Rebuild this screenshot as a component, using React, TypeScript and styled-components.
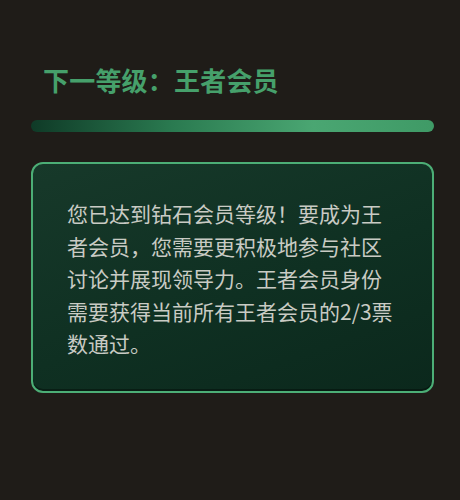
import { createGlobalStyle, styled } from "styled-components"

const GlobalStyle = createGlobalStyle`
    html, body {
        margin: 0;
        padding: 0;
        background: #1f1c18;
    }
    body {
        font-family: "Noto Sans CJK SC", "Noto Sans", sans-serif;
    }
`

const Page = styled.div`
    width: 460px;
    height: 500px;
    box-sizing: border-box;
    padding: 63px 26px 0 31px;
    display: flex;
    flex-direction: column;
    background: #1f1c18;
`

const Title = styled.h2`
    margin: 0 0 0 12px;
    font-size: 26px;
    line-height: 34px;
    font-weight: 700;
    color: #46a06b;
    letter-spacing: 0.2px;
`

const Progress = styled.div`
    margin-top: 23px;
    height: 12px;
    border-radius: 6px;
    background: linear-gradient(90deg, #0f3a27 0%, #2a7a50 35%, #4aa672 70%, #3f9a66 100%);
`

const Card = styled.div`
    margin-top: 30px;
    border: 2px solid #4cae76;
    border-radius: 12px;
    padding: 33px 30px 31px 34px;
    background: linear-gradient(160deg, #17392a 0%, #0f3022 55%, #0b281c 100%);
    box-shadow: inset 0 -2px 0 rgba(0, 0, 0, 0.35);
`

const Message = styled.p`
    margin: 0;
    font-size: 21px;
    line-height: 32.5px;
    color: #c9cbc4;
`

export default function App() {
    return (
        <>
            <GlobalStyle />
            <Page>
                <Title>下一等级：王者会员</Title>
                <Progress />
                <Card>
                    <Message>
                        您已达到钻石会员等级！要成为王者会员，您需要更积极地参与社区讨论并展现领导力。王者会员身份需要获得当前所有王者会员的2/3票数通过。
                    </Message>
                </Card>
            </Page>
        </>
    )
}
